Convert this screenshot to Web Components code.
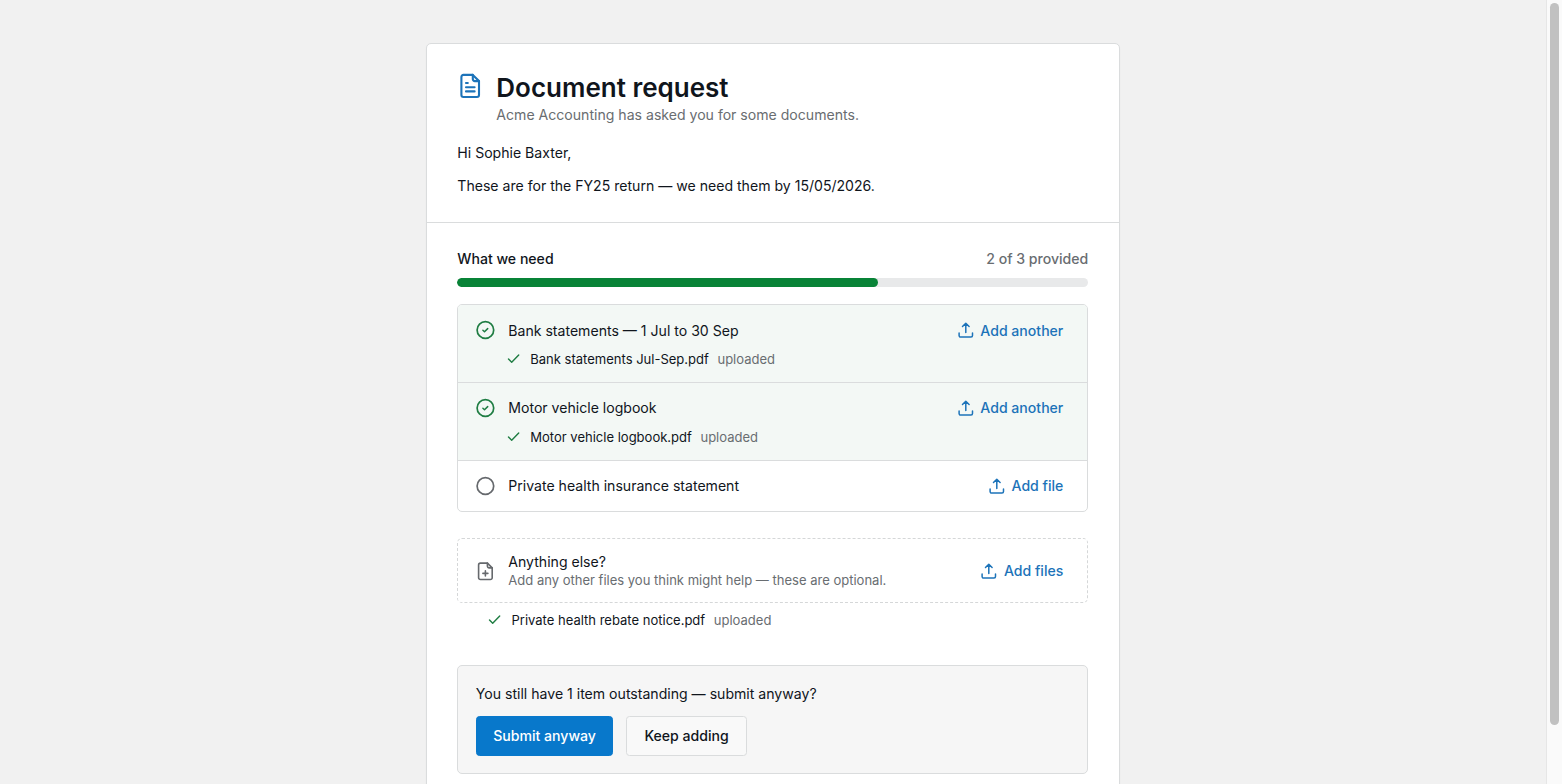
<!DOCTYPE html>
<html lang="en">
  <head>
    <meta charset="UTF-8" />
    <meta name="viewport" content="width=device-width, initial-scale=1.0" />
    <title>Document request</title>
    <style>
      html, body {
        height: 100%;
        margin: 0;
        overflow: hidden;
      }
      body {
        --line: #dadcdd;
        --muted: #696d71;
        --blue: #1c73b9;
        --green: #1f7d43;
        background: #f1f1f1;
        color: #10151c;
        font: 400 14.08px/21px Inter, "Liberation Sans", sans-serif;
      }
    </style>
  </head>
  <body>
    <request-page>
      <request-card>
        <request-header slot="header">
          <span slot="title">Document request</span>
          <span slot="subtitle">Acme Accounting has asked you for some documents.</span>
          <p>Hi Sophie Baxter,</p>
          <p>These are for the FY25 return — we need them by 15/05/2026.</p>
        </request-header>
        <request-progress done="2" total="3">What we need</request-progress>
        <request-list>
          <request-item done action="Add another">
            Bank statements — 1 Jul to 30 Sep
            <uploaded-file slot="file">Bank statements Jul-Sep.pdf</uploaded-file>
          </request-item>
          <request-item done action="Add another">
            Motor vehicle logbook
            <uploaded-file slot="file">Motor vehicle logbook.pdf</uploaded-file>
          </request-item>
          <request-item action="Add file">Private health insurance statement</request-item>
        </request-list>
        <extra-files action="Add files">
          Anything else?
          <span slot="hint">Add any other files you think might help — these are optional.</span>
          <uploaded-file slot="file">Private health rebate notice.pdf</uploaded-file>
        </extra-files>
        <submit-notice>
          You still have 1 item outstanding — submit anyway?
          <app-button slot="actions" primary>Submit anyway</app-button>
          <app-button slot="actions">Keep adding</app-button>
        </submit-notice>
      </request-card>
    </request-page>

    <template id="request-page">
      <style>
        :host {
          display: flex;
          height: 100vh;
          overflow: hidden;
        }
        main {
          flex: 1;
          display: flex;
          justify-content: center;
          align-items: flex-start;
          padding-top: 43px;
        }
        .track {
          box-sizing: border-box;
          width: 16px;
          padding: 3px 2px 0 3px;
          background: #fafafa;
          border-left: 1px solid #e6e6e6;
        }
        .thumb {
          height: 722px;
          margin-right: 1px;
          border-radius: 5px;
          background: #c1c1c1;
        }
      </style>
      <main><slot></slot></main>
      <div class="track"><div class="thumb"></div></div>
    </template>

    <template id="request-card">
      <style>
        :host {
          display: block;
          box-sizing: border-box;
          width: 694px;
          min-height: 900px;
          background: #fff;
          border: 1px solid var(--line);
          border-radius: 5px;
          box-shadow: 0 1px 2px rgba(0, 0, 0, 0.03);
        }
        .body {
          padding: 25px 30.7px 25px 30.3px;
        }
      </style>
      <slot name="header"></slot>
      <div class="body"><slot></slot></div>
    </template>

    <template id="request-header">
      <style>
        :host {
          display: block;
          box-sizing: border-box;
          height: 179px;
          padding: 28px 30.3px 0;
          border-bottom: 1px solid var(--line);
        }
        .top {
          display: flex;
          gap: 13px;
          margin-bottom: 17px;
        }
        svg {
          flex: none;
          width: 26px;
          height: 28px;
          color: var(--blue);
        }
        h1 {
          margin: 0;
          font-size: 26px;
          font-weight: 600;
          line-height: 32px;
        }
        .subtitle {
          color: var(--muted);
        }
        ::slotted(p) {
          margin: 0 0 12px;
        }
      </style>
      <div class="top">
        <svg viewBox="0 0 26 28" fill="none" stroke="currentColor" stroke-width="2.1" stroke-linecap="round" stroke-linejoin="round">
          <path d="M15.8 2.9H6.4a2 2 0 0 0-2 2v18.1a2 2 0 0 0 2 2h13.6a2 2 0 0 0 2-2V9.1z" />
          <path d="M15.8 2.9v4.2a2 2 0 0 0 2 2h4.2M9 11h1.8M9 15.2h8.6M9 19.4h8.6" />
        </svg>
        <div>
          <h1><slot name="title"></slot></h1>
          <div class="subtitle"><slot name="subtitle"></slot></div>
        </div>
      </div>
      <slot></slot>
    </template>

    <template id="request-progress">
      <style>
        :host {
          display: block;
          margin-bottom: 17px;
          font-weight: 500;
        }
        .labels {
          display: flex;
          justify-content: space-between;
          margin-bottom: 9px;
        }
        .count {
          color: var(--muted);
        }
        .bar {
          height: 9px;
          border-radius: 5px;
          background: #e8e9ea;
          overflow: hidden;
        }
        .fill {
          height: 100%;
          border-radius: 5px;
          background: #088337;
        }
      </style>
      <div class="labels"><span><slot></slot></span><span class="count"></span></div>
      <div class="bar"><div class="fill"></div></div>
    </template>

    <template id="request-list">
      <style>
        :host {
          display: block;
          border: 1px solid var(--line);
          border-radius: 5px;
          overflow: hidden;
        }
        ::slotted(:not(:last-child)) {
          border-bottom: 1px solid var(--line);
        }
      </style>
      <slot></slot>
    </template>

    <template id="request-item">
      <style>
        :host {
          display: block;
          padding: 14.7px 24px 15px 18px;
        }
        :host([done]) {
          padding-bottom: 12.9px;
          background: #f3f8f5;
        }
        .row {
          display: flex;
          align-items: center;
        }
        .row > svg {
          width: 20px;
          height: 20px;
          margin-right: 12px;
          color: #66696d;
        }
        :host([done]) .row > svg {
          color: var(--green);
        }
        .tick {
          display: none;
        }
        :host([done]) .tick {
          display: inline;
        }
        .name {
          flex: 1;
        }
        ::slotted(uploaded-file) {
          margin: 8.2px 0 0 30.7px;
        }
      </style>
      <div class="row">
        <svg viewBox="0 0 20 20" fill="none" stroke="currentColor" stroke-width="1.7" stroke-linecap="round" stroke-linejoin="round">
          <circle cx="9.4" cy="10" r="8.3" />
          <path class="tick" d="M6.9 10.2l1.6 1.5 3.2-3.1" stroke-width="1.5" />
        </svg>
        <span class="name"><slot></slot></span>
        <upload-link></upload-link>
      </div>
      <slot name="file"></slot>
    </template>

    <template id="upload-link">
      <style>
        :host {
          display: flex;
          align-items: center;
          gap: 6.6px;
          color: var(--blue);
          font-weight: 500;
        }
        svg {
          width: 16px;
          height: 18px;
        }
      </style>
      <svg viewBox="0 0 16 18" fill="none" stroke="currentColor" stroke-width="1.5" stroke-linecap="round" stroke-linejoin="round">
        <path d="M1.1 11.9v2.7a1.5 1.5 0 0 0 1.5 1.5h10.4a1.5 1.5 0 0 0 1.5-1.5v-2.7M7.8 11.6V2.4M4.5 5.5l3.3-3.3 3.3 3.3" />
      </svg>
      <slot></slot>
    </template>

    <template id="uploaded-file">
      <style>
        :host {
          display: flex;
          align-items: center;
          height: 20px;
          font-size: 13.02px;
          line-height: 20px;
        }
        svg {
          width: 14px;
          height: 14px;
          margin-right: 9.3px;
          color: var(--green);
        }
        .status {
          margin-left: 8.6px;
          color: var(--muted);
        }
      </style>
      <svg viewBox="0 0 14 14" fill="none" stroke="currentColor" stroke-width="1.4" stroke-linecap="round" stroke-linejoin="round">
        <path d="M1.5 7l3.2 3.3 7-7.3" />
      </svg>
      <slot></slot><span class="status">uploaded</span>
    </template>

    <template id="extra-files">
      <style>
        :host {
          display: block;
          margin-top: 26px;
        }
        .box {
          display: flex;
          align-items: center;
          box-sizing: border-box;
          height: 65px;
          padding: 0 24px 0 18px;
          border: 1px dashed #d5d7d8;
          border-radius: 5px;
        }
        .box > svg {
          width: 20px;
          height: 20px;
          margin-right: 12px;
          color: #66696d;
        }
        .text {
          flex: 1;
        }
        .title {
          line-height: 19px;
        }
        .hint {
          color: var(--muted);
          font-size: 13.02px;
          line-height: 18px;
        }
        ::slotted(uploaded-file) {
          margin: 7px 0 0 30.9px;
        }
      </style>
      <div class="box">
        <svg viewBox="0 0 20 20" fill="none" stroke="currentColor" stroke-width="1.6" stroke-linecap="round" stroke-linejoin="round">
          <path d="M11.4 2.1H4.4a1.8 1.8 0 0 0-1.8 1.8v12.8a1.8 1.8 0 0 0 1.8 1.8h10a1.8 1.8 0 0 0 1.8-1.8V6.9z" />
          <path d="M11.4 2.1v3a1.8 1.8 0 0 0 1.8 1.8h3M9.4 9.9v5M6.9 12.4h5" />
        </svg>
        <div class="text">
          <div class="title"><slot></slot></div>
          <div class="hint"><slot name="hint"></slot></div>
        </div>
        <upload-link></upload-link>
      </div>
      <slot name="file"></slot>
    </template>

    <template id="submit-notice">
      <style>
        :host {
          display: block;
          box-sizing: border-box;
          height: 109px;
          margin-top: 34.5px;
          padding: 16.8px 17.5px;
          background: #f6f6f6;
          border: 1px solid var(--line);
          border-radius: 5px;
        }
        .actions {
          display: flex;
          gap: 13px;
          margin-top: 12.6px;
        }
      </style>
      <div><slot></slot></div>
      <div class="actions"><slot name="actions"></slot></div>
    </template>

    <template id="app-button">
      <style>
        :host {
          display: block;
        }
        button {
          display: block;
          box-sizing: border-box;
          height: 39.5px;
          padding: 0 17.1px;
          border: 1px solid var(--line);
          border-radius: 3.5px;
          background: #f9f9f9;
          color: inherit;
          font: inherit;
          font-weight: 500;
        }
        :host([primary]) button {
          padding: 0 16.4px;
          border-color: #0878cb;
          background: #0878cb;
          color: #fff;
        }
      </style>
      <button><slot></slot></button>
    </template>

    <script type="text/javascript">
      class BaseElement extends HTMLElement {
        constructor() {
          super()
          this.attachShadow({ mode: 'open' })
          const template = document.getElementById(this.localName)
          this.shadowRoot.appendChild(template.content.cloneNode(true))
        }
      }

      // elements that show their "action" attribute as an upload link
      class ActionElement extends BaseElement {
        connectedCallback() {
          this.shadowRoot.querySelector('upload-link').textContent =
            this.getAttribute('action')
        }
      }

      class RequestProgress extends BaseElement {
        connectedCallback() {
          const done = Number(this.getAttribute('done'))
          const total = Number(this.getAttribute('total'))
          this.shadowRoot.querySelector('.count').textContent =
            `${done} of ${total} provided`
          this.shadowRoot.querySelector('.fill').style.width =
            `${(done / total) * 100}%`
        }
      }

      customElements.define('upload-link', class extends BaseElement {})
      customElements.define('uploaded-file', class extends BaseElement {})
      customElements.define('app-button', class extends BaseElement {})
      customElements.define('request-item', class extends ActionElement {})
      customElements.define('extra-files', class extends ActionElement {})
      customElements.define('request-progress', RequestProgress)
      customElements.define('request-list', class extends BaseElement {})
      customElements.define('submit-notice', class extends BaseElement {})
      customElements.define('request-header', class extends BaseElement {})
      customElements.define('request-card', class extends BaseElement {})
      customElements.define('request-page', class extends BaseElement {})
    </script>
  </body>
</html>
